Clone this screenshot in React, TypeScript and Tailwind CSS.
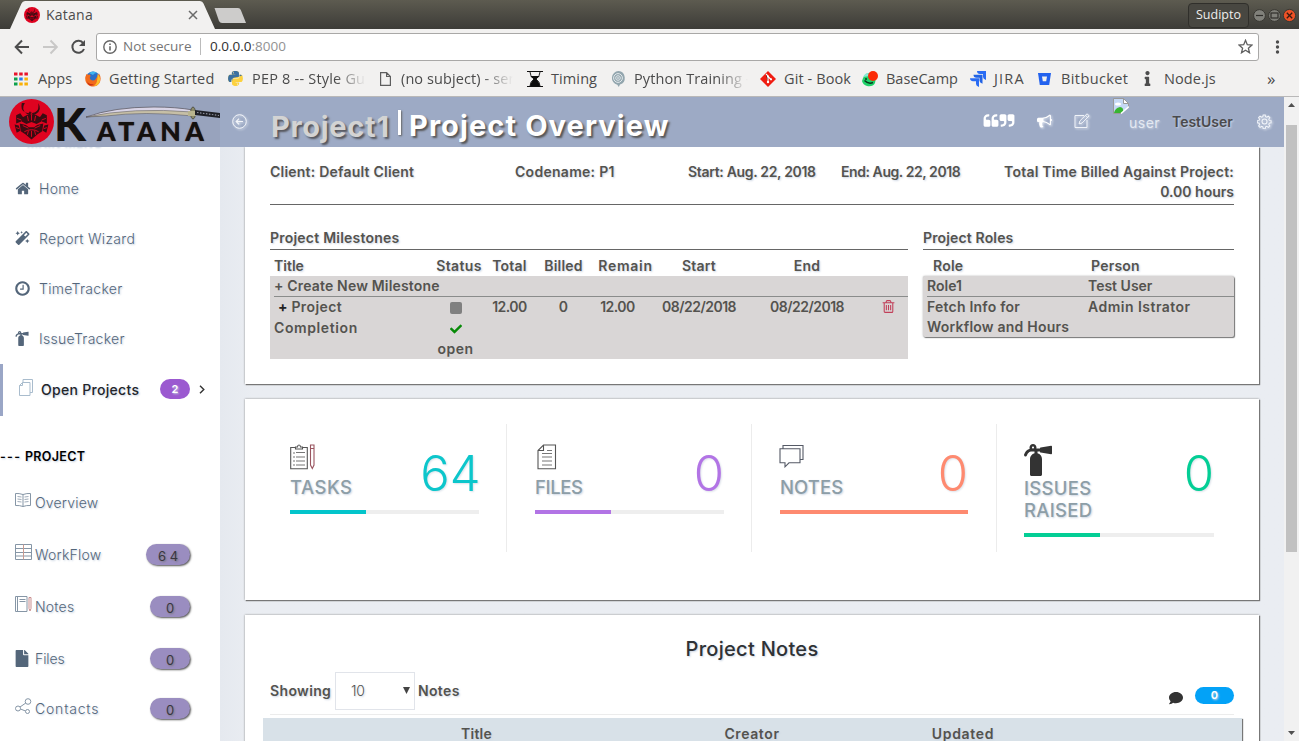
import React from "react";
import { FaMagic, FaFireExtinguisher, FaFile, FaCheck, FaComment, FaPython, FaInfo } from "react-icons/fa";

const FA = {
  home: "M1472 992v480q0 26-19 45t-45 19h-384v-384h-256v384h-384q-26 0-45-19t-19-45v-480q0-1 .5-3t.5-3l575-474 575 474q1 2 1 6zm223-69l-62 74q-8 9-21 11h-3q-13 0-21-7l-692-577-692 577q-12 8-24 7-13-2-21-11l-62-74q-8-10-7-23.5t11-21.5l719-599q32-26 76-26t76 26l244 204v-195q0-14 9-23t23-9h192q14 0 23 9t9 23v408l219 182q10 8 11 21.5t-7 23.5z",
  clock:
    "M1024 544v448q0 14-9 23t-23 9h-320q-14 0-23-9t-9-23v-64q0-14 9-23t23-9h224v-352q0-14 9-23t23-9h64q14 0 23 9t9 23zm416 352q0-148-73-273t-198-198-273-73-273 73-198 198-73 273 73 273 198 198 273 73 273-73 198-198 73-273zm224 0q0 209-103 385.5t-279.5 279.5-385.5 103-385.5-103-279.5-279.5-103-385.5 103-385.5 279.5-279.5 385.5-103 385.5 103 279.5 279.5 103 385.5z",
  trash:
    "M704 736v576q0 14-9 23t-23 9h-64q-14 0-23-9t-9-23v-576q0-14 9-23t23-9h64q14 0 23 9t9 23zm256 0v576q0 14-9 23t-23 9h-64q-14 0-23-9t-9-23v-576q0-14 9-23t23-9h64q14 0 23 9t9 23zm256 0v576q0 14-9 23t-23 9h-64q-14 0-23-9t-9-23v-576q0-14 9-23t23-9h64q14 0 23 9t9 23zm128 724v-948h-896v948q0 22 7 40.5t14.5 27 10.5 8.5h832q3 0 10.5-8.5t14.5-27 7-40.5zm-672-1076h448l-48-117q-7-9-17-11h-317q-10 2-17 11zm928 32v64q0 14-9 23t-23 9h-96v948q0 83-47 143.5t-113 60.5h-832q-66 0-113-58.5t-47-141.5v-952h-96q-14 0-23-9t-9-23v-64q0-14 9-23t23-9h309l70-167q15-37 54-63t79-26h320q40 0 79 26t54 63l70 167h309q14 0 23 9t9 23z",
  bullhorn:
    "M1664 640q53 0 90.5 37.5t37.5 90.5-37.5 90.5-90.5 37.5v384q0 52-38 90t-90 38q-417-347-812-380-58 19-91 66t-31 100.5 40 92.5q-20 33-23 65.5t6 58 33.5 55 48 50 61.5 50.5q-29 58-111.5 83t-168.5 11.5-132-55.5q-7-23-29.5-87.5t-32-94.5-23-89-15-101 3.5-98.5 22-110.5h-122q-66 0-113-47t-47-113v-192q0-66 47-113t113-47h480q435 0 896-384 52 0 90 38t38 90v384zm-128 604v-954q-394 302-768 343v270q377 42 768 341z",
  quoteLeft:
    "M832 960v384q0 80-56 136t-136 56h-384q-80 0-136-56t-56-136v-704q0-104 40.5-198.5t109.5-163.5 163.5-109.5 198.5-40.5h64q26 0 45 19t19 45v128q0 26-19 45t-45 19h-64q-106 0-181 75t-75 181v32q0 40 28 68t68 28h224q80 0 136 56t56 136zm896 0v384q0 80-56 136t-136 56h-384q-80 0-136-56t-56-136v-704q0-104 40.5-198.5t109.5-163.5 163.5-109.5 198.5-40.5h64q26 0 45 19t19 45v128q0 26-19 45t-45 19h-64q-106 0-181 75t-75 181v32q0 40 28 68t68 28h224q80 0 136 56t56 136z",
  quoteRight:
    "M832 320v704q0 104-40.5 198.5t-109.5 163.5-163.5 109.5-198.5 40.5h-64q-26 0-45-19t-19-45v-128q0-26 19-45t45-19h64q106 0 181-75t75-181v-32q0-40-28-68t-68-28h-224q-80 0-136-56t-56-136v-384q0-80 56-136t136-56h384q80 0 136 56t56 136zm896 0v704q0 104-40.5 198.5t-109.5 163.5-163.5 109.5-198.5 40.5h-64q-26 0-45-19t-19-45v-128q0-26 19-45t45-19h64q106 0 181-75t75-181v-32q0-40-28-68t-68-28h-224q-80 0-136-56t-56-136v-384q0-80 56-136t136-56h384q80 0 136 56t56 136z",
};

function Fa({ d, className }: { d: string; className?: string }) {
  return (
    <svg viewBox="0 0 1792 1792" fill="currentColor" className={className}>
      <path d={d} />
    </svg>
  );
}

/* ---------- browser window ---------- */

function TitleBar() {
  return (
    <div className="relative flex h-[29px] items-start bg-linear-to-b from-[#5d5b50] to-[#3d3c38]">
      <svg className="absolute left-0 top-0" width="260" height="29" viewBox="0 0 260 29">
        <path d="M10 29 L21.5 3.5 Q22.5 1 25 1 H200 Q202.500 1 203.500 3.500 L215 29 Z" fill="#f2f1f0" />
        <path d="M214.500 8 H238 Q240 8 240.800 10 L246 23 H222 Q220 23 219 21 Z" fill="#cdcccb" />
      </svg>
      <div className="relative flex h-[29px] w-[203px] items-center pl-[24px]">
        <Mask className="h-4 w-4" />
        <span className="ml-1.5 text-[14px] tracking-[0.24px] text-[#4c4c4c]">Katana</span>
        <svg className="ml-auto mr-[5px]" width="10" height="10" viewBox="0 0 10 10" stroke="#6a6a6a" strokeWidth="1.5">
          <path d="M1 1l8 8M9 1l-8 8" />
        </svg>
      </div>
      <div className="ml-auto flex h-[29px] items-center">
        <div className="mr-[4px] mt-px flex h-[25px] w-[61px] items-center justify-center rounded-[4px] border border-[#302f2b] bg-[#484741] text-[12.500px] text-[#eeeeec]">
          Sudipto
        </div>
        <svg width="46" height="14" viewBox="0 0 46 14">
          <g stroke="#383732" strokeWidth="1">
            <circle cx="6.500" cy="7.500" r="5.900" fill="#80807a" />
            <path d="M3 7.500h7" stroke="#2f2e2a" strokeWidth="1.200" />
            <circle cx="21.500" cy="7.500" r="5.900" fill="#80807a" />
            <rect x="18" y="5" width="7" height="5" fill="none" stroke="#2f2e2a" strokeWidth="1.200" />
            <circle cx="36.500" cy="7.500" r="6.100" fill="#ee5126" />
            <path d="M33.800 4.800l5.400 5.400M39.200 4.800l-5.400 5.400" stroke="#3a1a10" strokeWidth="1.300" />
          </g>
        </svg>
      </div>
    </div>
  );
}

function Toolbar() {
  return (
    <div className="flex h-[35px] items-center bg-[#f2f1f0]">
      <svg className="ml-[13px]" width="76" height="20" viewBox="0 0 76 20" fill="none" strokeWidth="2">
        <path d="M16 10H3M9 3.500L2.700 10L9 16.500" stroke="#4d4d4d" />
        <path d="M30 10h13M37.500 3.500L43.800 10L37.500 16.500" stroke="#c9c8c7" />
        <path d="M70.300 6.300A6 6 0 1 0 71 12" stroke="#4d4d4d" />
        <path d="M72 3v6h-6z" fill="#4d4d4d" />
      </svg>
      <div className="ml-[7px] flex h-[28px] w-[1163px] items-center rounded-[3px] border border-[#a9a8a7] bg-white pl-1.5 text-[13.500px]">
        <svg width="14" height="14" viewBox="0 0 14 14" fill="none" stroke="#666" strokeWidth="1.400">
          <circle cx="7" cy="7" r="6.200" />
          <path d="M7 6.200v4.300M7 3.400v1.500" strokeWidth="1.600" />
        </svg>
        <span className="ml-[6px] w-[69px] whitespace-nowrap text-[#757575]">Not secure</span>
        <span className="ml-2 mr-[9px] h-[17px] w-px bg-[#bbb]" />
        <span className="text-[#303030]">
          0.0.0.0<span className="text-[#929292]">:8000</span>
        </span>
        <svg className="ml-auto mr-[5px]" width="15" height="15" viewBox="0 0 15 15" fill="none" stroke="#5f5f5f" strokeWidth="1.300">
          <path d="M7.500 1.300l1.800 4.400 4.700.4-3.600 3.100 1.100 4.600-4-2.500-4 2.500 1.100-4.600L1 6.100l4.700-.4z" />
        </svg>
      </div>
      <svg className="ml-[16px]" width="5" height="16" viewBox="0 0 5 16" fill="#4c4c4c">
        <circle cx="2.500" cy="3" r="1.700" />
        <circle cx="2.500" cy="8" r="1.700" />
        <circle cx="2.500" cy="13" r="1.700" />
      </svg>
    </div>
  );
}

function Bookmark({
  icon,
  width,
  gap = "pl-2",
  fade,
  children,
}: {
  icon: React.ReactNode;
  width: string;
  gap?: string;
  fade?: boolean;
  children: string;
}) {
  return (
    <div className={`flex shrink-0 items-center ${width}`}>
      <span className="flex shrink-0 items-center">{icon}</span>
      <span className={`overflow-hidden whitespace-nowrap ${gap} ${fade ? "w-[122px] mask-r-from-75% mask-r-to-100%" : ""}`}>
        {children}
      </span>
    </div>
  );
}

function Bookmarks() {
  return (
    <div className="flex h-[33px] items-center border-b border-[#b9b8b8] bg-[#f2f1f0] pb-[3px] pl-[14px] text-[14.500px] tracking-[0.100px] text-[#4b4b4b]">
      <Bookmark
        width="w-[71px]"
        gap="pl-[10px]"
        icon={
          <svg width="14" height="14" viewBox="0 0 14 14">
            <path d="M0 .5h3.500v3H0zM5.200.5h3.500v3H5.200zM10.400.5h3.500v3h-3.500z" fill="#e8152c" />
            <path d="M0 5.500h3.500v3H0z" fill="#0da04b" />
            <path d="M5.200 5.500h3.500v3H5.200z" fill="#2a7bf0" />
            <path d="M10.400 5.500h3.500v3h-3.500zM5.200 10.500h3.500v3H5.200zM10.400 10.500h3.500v3h-3.500z" fill="#f9b108" />
            <path d="M0 10.500h3.500v3H0z" fill="#0da04b" />
          </svg>
        }
      >
        Apps
      </Bookmark>
      <Bookmark
        width="w-[142px] tracking-[0.200px]"
        icon={
          <svg width="16" height="16" viewBox="0 0 16 16">
            <circle cx="8" cy="7.500" r="7" fill="#2c6fc9" />
            <path d="M4 2q4-3 8 0-3 0-4 2z" fill="#3fb6ef" />
            <path d="M1.500 3Q3 4 4.500 3.600 6 4 5.200 6q-1 .5.300 2.500 2 1.500 4.500.5l3-4.500 1-2Q17 7 14.500 12 11 17 5 15-.500 12.500.300 6z" fill="#f26b1c" />
            <path d="M12.500 3Q16 6 14.800 10.500 13 15 9 15q4-3 3.500-12z" fill="#fcc02c" />
            <path d="M2 10q2 4 7 3-3 3-6 0z" fill="#c92f17" />
          </svg>
        }
      >
        Getting Started
      </Bookmark>
      <Bookmark
        width="w-[153px] tracking-[0.200px]"
        fade
        icon={
          <svg width="17" height="17" viewBox="0 0 512 512">
            <defs>
              <clipPath id="py-top">
                <path d="M0 0h512v130L360 200 200 235 130 370H0z" />
              </clipPath>
            </defs>
            <FaPython size={512} color="#fcd13e" />
            <g clipPath="url(#py-top)">
              <FaPython size={512} color="#3a70a2" />
            </g>
          </svg>
        }
      >
        PEP 8 -- Style Guide
      </Bookmark>
      <Bookmark
        width="w-[147px]"
        gap="pl-[10px]"
        fade
        icon={
          <svg width="11" height="14" viewBox="0 0 11 14" fill="none" stroke="#5e5e5e" strokeWidth="1.200">
            <path d="M.6.600h6l3.800 3.900v8.900H.6zM6.600.600v3.900h3.800" />
          </svg>
        }
      >
        (no subject) - sender
      </Bookmark>
      <Bookmark
        width="w-[84px]"
        icon={
          <svg width="16" height="16" viewBox="0 0 16 16">
            <path d="M0 .5h16M0 15.500h16" stroke="#111" strokeWidth="1.200" />
            <path d="M3 1q0 4 4 7-4 3-4 7M13 1q0 4-4 7 4 3 4 7" fill="none" stroke="#222" />
            <path d="M3.300 5h9.400Q11 7 9 8q3.500 3 4 7H3q.500-4 4-7-2.500-1-3.700-3z" fill="#0d0d0d" />
          </svg>
        }
      >
        Timing
      </Bookmark>
      <Bookmark
        width="w-[149px]"
        fade
        icon={
          <svg width="15" height="16" viewBox="0 0 15 16">
            <path d="M7.500 0A7 7 0 0 1 9 13.600L7.800 16 6.300 13.800A7 7 0 0 1 7.500 0z" fill="#93a6ae" />
            <g fill="none" stroke="#e3e9ec" strokeWidth="1">
              <circle cx="7" cy="7" r="4.400" />
              <circle cx="7" cy="7" r="2.300" />
              <circle cx="7" cy="7" r=".5" />
            </g>
          </svg>
        }
      >
        Python Training -
      </Bookmark>
      <Bookmark
        width="w-[102px]"
        icon={
          <svg width="16" height="16" viewBox="0 0 16 16">
            <path d="M8 0l8 8-8 8-8-8z" fill="#f01d12" />
            <path d="M6 3l2 2v6.500M8 5.500l3 3" stroke="#fff" strokeWidth="1.100" />
            <circle cx="8" cy="5.500" r="1.100" fill="#fff" />
            <circle cx="8" cy="11" r="1.200" fill="#fff" />
            <circle cx="11" cy="8.300" r="1.100" fill="#fff" />
          </svg>
        }
      >
        Git - Book
      </Bookmark>
      <Bookmark
        width="w-[108px] tracking-[0px]"
        icon={
          <svg width="16" height="16" viewBox="0 0 16 16">
            <path d="M0 10Q2 3 6 2l8 5-1 5q-2 4-8 3-4-1-5-5z" fill="#1fd269" />
            <path d="M1 6q2-4 5-4l2 3z" fill="#8ae9d7" />
            <path d="M2.500 9.500q4 4 8.500 2" stroke="#063b1c" strokeWidth="1.500" fill="none" />
            <circle cx="4" cy="8" r="1" fill="#063b1c" />
            <circle cx="11" cy="5" r="5" fill="#fb2a07" />
          </svg>
        }
      >
        BaseCamp
      </Bookmark>
      <Bookmark
        width="w-[68px] tracking-[1.200px]"
        icon={
          <svg width="16" height="16" viewBox="0 0 16 16" fill="#2a6cf4">
            <path d="M7 0h9v9q-3-1-3-3V3h-3Q7 3 7 0z" />
            <path d="M3.500 3.700h9v9q-3-1-3-3v-3h-3q-3 0-3-3z" fill="#2263e4" />
            <path d="M0 7.300h9V16q-3-1-3-3v-2.700H3Q0 10 0 7.300z" />
          </svg>
        }
      >
        JIRA
      </Bookmark>
      <Bookmark
        width="w-[106px] tracking-[0.400px]"
        gap="pl-[10px]"
        icon={
          <svg width="13" height="12" viewBox="0 0 13 12">
            <path d="M0 0h13l-1.800 12H1.800z" fill="#2362ee" />
            <path d="M4 3.600h5l-.8 4.600H4.800z" fill="#f2f1f0" />
          </svg>
        }
      >
        Bitbucket
      </Bookmark>
      <Bookmark width="w-[103px]" gap="pl-[13px]" icon={<FaInfo className="h-[15px] w-[7px] text-[#4d4d4d]" />}>
        Node.js
      </Bookmark>
      <span className="ml-[20px] text-[17px] leading-none">»</span>
    </div>
  );
}

function Mask({ className }: { className?: string }) {
  return (
    <svg viewBox="0 0 44 44" className={className}>
      <circle cx="22" cy="22" r="22" fill="#df0320" />
      <g fill="#3a0c12">
        <path d="M15.500 4Q11 11 18 15l2.500 1 1.500-3 1.500 3 2.500-1q7-4 2.500-11 1.500 7-3 9l-3.500 1-1.500-2-1.500 2-3.500-1q-4.500-2-3-9z" />
        <path d="M7 16l4-2 3 4-2 4-5 2zM37 16l-4-2-3 4 2 4 5 2z" />
        <path d="M13 18q9-6 18 0l.500 4-4.500 2.500-5-2-5 2L12.500 22z" />
        <path d="M10.500 24l6 1.500 3 2h5l3-2 6-1.500-1 7.500-4.500 3-6 5-6-5-4.500-3z" />
        <path d="M5.500 25l4 1 1.500 5-3.500 2zM38.500 25l-4 1-1.500 5 3.500 2z" />
      </g>
      <g stroke="#df0320" strokeWidth=".9" fill="none">
        <path d="M22 15v6M18 16.500l1 5M26 16.500l-1 5M13.500 26l5.500 2.500M30.500 26L25 28.500M15 32q7-4 14 0M18 35l1-4M22 37v-6M26 35l-1-4M8 19l4 1.500M36 19l-4 1.500M7 28l3 1M37 28l-3 1" />
      </g>
    </svg>
  );
}

/* ---------- application header ---------- */

function Logo() {
  return (
    <div className="relative h-[50px] w-[220px] shrink-0 self-start overflow-hidden bg-[#98a3bd]">
      <Mask className="absolute left-[9px] top-[2px] h-[45px] w-[45px]" />
      <div className="absolute left-[54px] top-[5px] flex items-baseline whitespace-nowrap font-['Lato'] font-black leading-[44px] text-[#14110f]">
        <span className="w-[43px] origin-left text-[46px]">K</span>
        <span className="text-[26.500px] tracking-[4.600px] [text-shadow:0_0_1px_#5a3038]">ATANA</span>
      </div>
      <svg className="absolute left-[84px] top-[8px]" width="136" height="18" viewBox="0 0 136 18">
        <path d="M2 12Q30 2 70 2 92 2 109 5v3Q60 4 24 10L2 12z" fill="#d9d4e6" stroke="#54525a" strokeWidth=".7" />
        <path d="M2 12q46-10 107-5v4Q60 6 22 11z" fill="#c6bfa6" stroke="#54525a" strokeWidth=".5" />
        <ellipse cx="109" cy="8" rx="2.500" ry="6" fill="#8b8a68" stroke="#3c3c34" strokeWidth=".7" />
        <path d="M104 6h8v5h-8z" fill="#b8b48e" />
        <path d="M111 5l25 3v5l-25-3z" fill="#1f2026" />
        <path d="M113 7.500l22 3" stroke="#8c8f9b" strokeWidth="1.200" strokeDasharray="1.500 1.500" />
      </svg>
    </div>
  );
}

const iconGlow = "drop-shadow-[1px_1px_1px_#dfe5f0]";

function Header() {
  return (
    <header className="flex h-[50px] w-[1284px] items-center overflow-hidden bg-[#9daac5] pb-[2px]">
      <Logo />
      <svg className={`ml-3 ${iconGlow}`} width="15" height="15" viewBox="0 0 15 15" fill="none" stroke="#f4f6fa" strokeWidth="1">
        <circle cx="7.500" cy="7.500" r="6.800" />
        <path d="M11 7.500H4.300M7 4.700L4.200 7.500 7 10.300" strokeWidth="1.200" />
      </svg>
      <h1 className="ml-6 flex items-center whitespace-nowrap text-[29px] font-bold leading-none text-white">
        <span className="w-[127px] pt-[10px] tracking-[0.700px] text-[#d3d3d3] [text-shadow:2px_2px_2px_#55565c]">Project1</span>
        <span className="mt-[3px] h-[25px] w-[3px] shrink-0 bg-white shadow-[1px_1px_2px_#666]" />
        <span className="ml-[8px] w-[574px] pt-[8px] tracking-[1.100px] [text-shadow:2px_2px_2px_#555]">Project Overview</span>
      </h1>
      <div className="flex items-center text-white">
        <Fa d={FA.quoteLeft} className="h-4 w-4" />
        <Fa d={FA.quoteRight} className="h-4 w-4" />
      </div>
      <Fa d={FA.bullhorn} className={`ml-[22px] h-[16px] w-[15px] text-white ${iconGlow}`} />
      <svg className={`ml-[22px] ${iconGlow}`} width="16" height="16" viewBox="0 0 16 16" fill="none" stroke="#f0f3f8" strokeWidth="1">
        <path d="M10 2.500H1v12h12V7M5 10.800l.9-2.900L13 .8l2.200 2-7.200 7.300zM11.500 2.300l2 2" />
      </svg>
      <div className="ml-[23px] flex h-[48px] w-[47px] items-start pt-px">
        <svg width="16" height="16" viewBox="0 0 16 16" className="shrink-0">
          <path d="M.5.500h10l5 5v10H.5z" fill="#c5d8f5" stroke="#999" />
          <path d="M10.500.500v5h5z" fill="#fff" stroke="#999" />
          <ellipse cx="5" cy="6" rx="3" ry="1.600" fill="#fff" />
          <path d="M1 15q1-5 6-6 4 0 3 6z" fill="#38b432" />
          <path d="M8 16l8-7v7z" fill="#9daac5" />
          <path d="M8 15.500L16 8.500" stroke="#fff" strokeWidth="1.500" />
        </svg>
        <span className="mt-[15px] text-[14px] leading-5 tracking-[0.500px] text-[#e4e9f2] [text-shadow:1px_1px_2px_#c5cfe0]">user</span>
      </div>
      <span className="ml-[12px] w-[85px] text-[14px] font-semibold text-[#4a4a4c] [text-shadow:1px_1px_2px_#d0d8e8]">TestUser</span>
      <svg className={iconGlow} width="15" height="15" viewBox="0 0 24 24" fill="none" stroke="#f2f5fa" strokeWidth="1.700">
        <circle cx="12" cy="12" r="4" />
        <path d="M10.300 1.500h3.400l.6 3 2 .9 2.600-1.700 2.400 2.400-1.700 2.600.9 2 3 .6v3.400l-3 .6-.9 2 1.700 2.600-2.400 2.400-2.600-1.700-2 .9-.6 3h-3.400l-.6-3-2-.9-2.600 1.700-2.400-2.400 1.700-2.600-.9-2-3-.6V11.300l3-.6.9-2L2.700 6.100l2.400-2.400 2.600 1.700 2-.9z" transform="scale(.96)" />
      </svg>
    </header>
  );
}

/* ---------- sidebar ---------- */

function NavItem({ icon, label }: { icon: React.ReactNode; label: string }) {
  return (
    <li className="flex h-[50px] items-center pb-[2px] pl-[15px]">
      <span className="flex w-[24px] items-center">{icon}</span>
      <span className="tracking-[0.300px]">{label}</span>
    </li>
  );
}

function SubItem({
  icon,
  label,
  count,
  wide,
  height = "h-[52px]",
  tracking = "tracking-[0.200px]",
}: {
  icon: React.ReactNode;
  label: string;
  count?: string;
  wide?: boolean;
  height?: string;
  tracking?: string;
}) {
  return (
    <li className={`flex items-center pl-[15px] pr-[30px] ${height}`}>
      <span className="flex w-[20px] items-center pb-1">{icon}</span>
      <span className={tracking}>{label}</span>
      {count && (
        <span
          className={`ml-auto flex h-[21px] items-center justify-center rounded-full bg-[#9a8dc0] pt-[5px] text-[13px] font-normal text-[#39363f] shadow-[1px_1px_2px_#555] [text-shadow:1px_1px_2px_#777] ${
            wide ? "w-[44px]" : "w-[40px]"
          }`}
        >
          {count}
        </span>
      )}
    </li>
  );
}

function Sidebar() {
  return (
    <nav className="h-[594px] w-[220px] shrink-0 overflow-hidden bg-white text-[14px] font-light text-[#54667a] [text-shadow:1px_1px_2px_#c3cfdd]">
      <div className="-mt-[13px] h-[30px] pl-[26px] text-[12px] font-semibold leading-[17px] tracking-[0.500px] text-[#dfe2e8]">
        MAIN MENU
      </div>
      <ul>
        <NavItem label="Home" icon={<Fa d={FA.home} className="h-[17px] w-[16px]" />} />
        <NavItem label="Report Wizard" icon={<FaMagic className="h-[14px] w-[15px]" />} />
        <NavItem label="TimeTracker" icon={<Fa d={FA.clock} className="-ml-px h-[17px] w-[17px]" />} />
        <NavItem label="IssueTracker" icon={<FaFireExtinguisher className="h-[15px] w-[14px]" />} />
      </ul>
      <div className="flex h-[52px] items-center border-l-[3px] border-[#9aa6c6] pb-[2px] pl-[16px] font-medium text-[#23262b]">
        <svg width="14" height="17" viewBox="0 0 14 17" fill="none" stroke="#a9bccd" strokeWidth="1" className="mb-1">
          <path d="M4 3.500V.5h9.500v13H11M.5 6.500l3-3H11v13H.5zM.5 6.500h3v-3" />
        </svg>
        <span className="ml-[8px] w-[119px] whitespace-nowrap tracking-[0.300px]">Open Projects</span>
        <span className="flex h-5 w-[30px] items-center justify-center rounded-full bg-[#9b59d0] text-[11px] font-semibold text-white">2</span>
        <svg className="ml-[9px]" width="6" height="9" viewBox="0 0 6 9" fill="none" stroke="#333" strokeWidth="1.400">
          <path d="M1 .8l3.800 3.700L1 8.200" />
        </svg>
      </div>
      <div className="mt-[31px] h-[20px] whitespace-nowrap text-[12.500px] font-semibold leading-[20px] text-black">
        <span className="inline-block w-[25px] tracking-[1.300px]">---</span>
        <span className="tracking-[0.300px]">PROJECT</span>
      </div>
      <ul className="mt-[9px]">
        <SubItem
          label="Overview"
          icon={
            <svg width="16" height="14" viewBox="0 0 16 14" fill="none" stroke="#8696a6" strokeWidth="1">
              <path d="M8 1.500Q4 .200.500.500v12q4-.300 7.500 1 3.500-1.300 7.500-1v-12Q12 .200 8 1.500zM8 1.500v12" />
              <path d="M2.500 3.500l4 .5M2.500 6l4 .5M2.500 8.500l4 .5M9.500 4l4-.5M9.500 6.500l4-.5M9.500 9l4-.5" strokeWidth=".8" />
            </svg>
          }
        />
        <SubItem
          label="WorkFlow"
          count="6 4"
          wide
          icon={
            <svg width="17" height="16" viewBox="0 0 17 16" fill="none" stroke="#8696a6" strokeWidth="1">
              <path d="M.5.500h16v15H.5zM.5 4.500h16M.5 8.500h16M.5 12h16" />
              <path d="M8.500.500v15" stroke="#c99a90" />
            </svg>
          }
        />
        <SubItem
          label="Notes"
          count="0"
          icon={
            <svg width="17" height="16" viewBox="0 0 17 16" fill="none" stroke="#8696a6" strokeWidth="1">
              <path d="M.5.500h11.500v15H.5zM2.500.500v15M4.500 3.500h6M4.500 5.500h6" />
              <path d="M14 1.500h2v11l-1 2.500-1-2.500z" stroke="#c98f8f" />
            </svg>
          }
        />
        <SubItem label="Files" count="0" tracking="tracking-[-0.100px]" icon={<FaFile className="mt-1 h-[17px] w-[14px]" />} />
        <SubItem
          label="Contacts"
          count="0"
          height="h-[48px]"
          tracking="tracking-[0.800px]"
          icon={
            <svg width="17" height="17" viewBox="0 0 17 17" fill="none" stroke="#8696a6" strokeWidth="1">
              <circle cx="13" cy="3.500" r="2.800" />
              <circle cx="3" cy="10.500" r="2.500" />
              <circle cx="12.500" cy="13.500" r="2" />
              <path d="M5 9l5.800-4M5.500 11l5 2" />
            </svg>
          }
        />
      </ul>
    </nav>
  );
}

/* ---------- content ---------- */

const cardShadow = "shadow-[1px_1px_1px_#777,0_0_2px_#888]";
const milestoneColumns = "grid grid-cols-[158px_55px_53px_55px_69px_78px_138px_1fr]";

function Overview() {
  return (
    <section className={`h-[237px] bg-white px-[25px] pt-[15px] font-semibold ${cardShadow}`}>
      <div className="flex h-[43px] border-b border-[#666] leading-5">
        <span className="w-[245px]">Client: Default Client</span>
        <span className="w-[173px] tracking-[0.280px]">Codename: P1</span>
        <span className="w-[153px] whitespace-nowrap tracking-[-0.320px]">Start: Aug. 22, 2018</span>
        <span className="w-[125px] whitespace-nowrap tracking-[-0.430px]">End: Aug. 22, 2018</span>
        <span className="ml-auto whitespace-nowrap text-right">
          Total Time Billed Against Project:
          <br />
          <span className="tracking-[0px]">0.00 hours</span>
        </span>
      </div>
      <div className="mt-[23px] flex justify-between leading-5">
        <div className="w-[638px]">
          <div className="h-[22px] border-b border-[#666]">Project Milestones</div>
          <div className={`mt-[6px] h-[20px] text-center ${milestoneColumns}`}>
            <span className="pl-1 text-left tracking-[0px]">Title</span>
            <span className="whitespace-nowrap pl-[7px] tracking-[0.350px]">Status</span>
            <span>Total</span>
            <span>Billed</span>
            <span className="tracking-[0.700px]">Remain</span>
            <span>Start</span>
            <span>End</span>
          </div>
          <div className="h-[83px] bg-[#d9d6d6] [text-shadow:none]">
            <div className="ml-1 h-[21px] border-b border-[#8a8c8b] tracking-[0.170px]">+ Create New Milestone</div>
            <div className={`-mt-px text-center leading-[21px] ${milestoneColumns}`}>
              <span className="pl-1 text-left tracking-[0.600px]">
                <span className="pl-1 font-bold tracking-[0px] text-[#222]">+</span>
                <span className="tracking-[0.400px]"> Project</span>
                <br />
                Completion
              </span>
              <span className="flex flex-col items-center">
                <span className="mt-[6px] h-3 w-3 rounded-[2px] bg-[#808080]" />
                <FaCheck className="mt-[9px] h-3 w-3 text-[#078a07]" />
                <span className="mt-[3px] tracking-[0.500px]">open</span>
              </span>
              <span className="tracking-[-0.500px]">12.00</span>
              <span>0</span>
              <span className="pr-4 tracking-[-0.500px]">12.00</span>
              <span className="tracking-[-0.500px]">08/22/2018</span>
              <span className="tracking-[-0.500px]">08/22/2018</span>
              <Fa d={FA.trash} className="ml-[5px] mt-[3px] h-[15px] w-[15px] text-[#c1405a]" />
            </div>
          </div>
        </div>
        <div className="w-[311px]">
          <div className="h-[22px] border-b border-[#666] tracking-[0.150px]">Project Roles</div>
          <div className="mt-[6px] flex h-[20px]">
            <span className="w-[158px] pl-[10px]">Role</span>
            <span className="pl-[10px]">Person</span>
          </div>
          <div className="h-[61px] rounded-[2px] bg-[#d9d6d6] pl-1 shadow-[1px_1px_1px_#777,0_0_2px_#aaa] [text-shadow:none]">
            <div className="flex h-[21px] border-b border-[#8a8c8b] tracking-[0px]">
              <span className="w-[161px]">Role1</span>
              <span>Test User</span>
            </div>
            <div className="flex">
              <span className="w-[161px] whitespace-nowrap">
                Fetch Info for
                <br />
                Workflow and Hours
              </span>
              <span className="tracking-[0.480px]">Admin Istrator</span>
            </div>
          </div>
        </div>
      </div>
    </section>
  );
}

function Stat({
  icon,
  label,
  value,
  color,
  bar,
  fill,
  labelClass = "tracking-[0px]",
  className = "",
}: {
  icon: React.ReactNode;
  label: React.ReactNode;
  value: string;
  color: string;
  bar: string;
  fill: string;
  labelClass?: string;
  className?: string;
}) {
  return (
    <div className={`h-[128px] w-[245px] pt-5 ${className}`}>
      <div className="flex justify-between">
        <div>
          <div className="min-h-[32px] text-[#333]">{icon}</div>
          <div className={`text-[18.500px] font-medium leading-[22px] text-[#8d9ea7] ${labelClass}`}>{label}</div>
        </div>
        <div className={`h-[50px] pt-[4px] text-[49px] font-light leading-[52px] tracking-[0px] [text-shadow:1px_1px_2px_#dde2ea] ${color}`}>
          {value}
        </div>
      </div>
      <div className="mt-[12px] h-1 bg-[#eeeeee]">
        <div className={`h-1 ${bar} ${fill}`} />
      </div>
    </div>
  );
}

function Stats() {
  return (
    <section className={`mt-[15px] flex h-[201px] bg-white pl-[17px] pt-[25px] ${cardShadow}`}>
      <Stat
        label="TASKS"
        labelClass="tracking-[0.500px]"
        value="64"
        color="text-[#0cc6cb] -mr-[1.500px]"
        bar="bg-[#03c5cb]"
        fill="w-[40%]"
        className="border-r border-[#ececec] pl-7 pr-[27px]"
        icon={
          <svg width="25" height="26" viewBox="0 0 25 26" fill="none" stroke="#555" strokeWidth="1.100">
            <path d="M5 3.500H.7v21.300h16.600V3.500H13M5.500 5V3h2Q7.500 1 9 1t1.500 2h2v2z" />
            <path d="M3 9h2M6 8.500h9M3 13h2M6 13h9M3 17h2M6 17h9M3 21h2M6 21h9" stroke="#777" />
            <path d="M20.500 1h3.500v20l-1.700 3.500-1.800-3.500zM20.500 4.500H24" stroke="#9a5560" />
          </svg>
        }
      />
      <Stat
        label="FILES"
        labelClass="tracking-[-0.400px]"
        value="0"
        color="text-[#b274e5]"
        bar="bg-[#b274e5]"
        fill="w-[40%]"
        className="border-r border-[#ececec] pl-7 pr-[27px]"
        icon={
          <svg width="22" height="26" viewBox="0 0 22 26" fill="none" stroke="#555" strokeWidth="1.100">
            <path d="M8.500 1H20.500v23.800H3V6.500zM8.500 1v5.500H3" />
            <path d="M12 6.500h5M7 9.500h10M7 13h10M7 17h10M7 21h10" stroke="#777" />
          </svg>
        }
      />
      <Stat
        label="NOTES"
        labelClass="tracking-[0.100px]"
        value="0"
        color="text-[#fe8a70]"
        bar="bg-[#fe8a70]"
        fill="w-full"
        className="border-r border-[#ececec] pl-7 pr-[28px]"
        icon={
          <svg width="25" height="24" viewBox="0 0 25 24" fill="none" stroke="#555a66" strokeWidth="1.100" className="-ml-px">
            <path d="M1 4.800h20v14H10l-4 4v-4H1zM4 4.500V1.500h20v14h-3" />
          </svg>
        }
      />
      <Stat
        label={
          <>
            ISSUES
            <br />
            RAISED
          </>
        }
        labelClass="tracking-[0.300px]"
        value="0"
        color="text-[#03ce95]"
        bar="bg-[#03ce95]"
        fill="w-[40%]"
        className="pl-[27px] pr-[28px]"
        icon={<FaFireExtinguisher className="-mt-px h-[34px] w-[28px]" />}
      />
    </section>
  );
}

function Notes() {
  return (
    <section className={`mt-[15px] h-[140px] overflow-hidden bg-white px-[18px] pt-[20px] ${cardShadow}`}>
      <h2 className="text-center text-[20px] font-medium leading-7 tracking-[0.300px] text-[#2f3236]">Project Notes</h2>
      <div className="ml-[7px] mr-[7px] mt-[9px] flex h-[43px] border-b border-[#ececec] font-semibold">
        <div className="flex h-[38px] items-center">
          <span className="w-[65px] pb-[2px] tracking-[0.350px]">Showing</span>
          <span className="flex h-[38px] w-[80px] items-center justify-between border border-[#e1e4ea] pb-px pl-[15px] pr-1 font-light tracking-[-0.300px]">
            10
            <svg width="7" height="7" viewBox="0 0 7 7" fill="#444">
              <path d="M0 0h7L3.500 7z" />
            </svg>
          </span>
          <span className="ml-[3px] pb-[2px] tracking-[0.350px]">Notes</span>
        </div>
        <div className="ml-auto flex h-[46px] items-center">
          <FaComment className="mt-[5px] h-[14px] w-[14px] text-[#333]" />
          <span className="ml-[12px] flex h-[17px] w-[39px] items-center justify-center rounded-full bg-[#03a2f7] text-[11px] font-semibold text-white">
            0
          </span>
        </div>
      </div>
      <div className="mt-[3px] grid h-[40px] w-[979px] grid-cols-[427px_124px_298px_1fr] bg-[#d8e1e8] pt-[6px] text-center font-semibold leading-5 shadow-[1px_1px_1px_#777]">
        <span>Title</span>
        <span className="tracking-[0.600px]">Creator</span>
        <span className="tracking-[0.700px]">Updated</span>
      </div>
    </section>
  );
}

function Scrollbar() {
  return (
    <div className="flex h-[644px] w-[15px] flex-col items-center bg-[#f1f1f1]">
      <svg className="mt-[6px]" width="7" height="4" viewBox="0 0 7 4" fill="#505050">
        <path d="M3.500 0L7 4H0z" />
      </svg>
      <div className="mt-[18px] h-[427px] w-[11px] bg-[#c1c1c1]" />
      <svg className="mb-[6px] mt-auto" width="7" height="4" viewBox="0 0 7 4" fill="#505050">
        <path d="M3.500 4L7 0H0z" />
      </svg>
    </div>
  );
}

export default function App() {
  return (
    <div className="h-[741px] w-[1299px] overflow-hidden bg-[#eaedf2]">
      <div className="font-['Open_Sans','Noto_Sans',sans-serif]">
        <TitleBar />
        <Toolbar />
        <Bookmarks />
      </div>
      <div className="flex font-['Inter','Liberation_Sans',sans-serif]">
        <div className="w-[1284px]">
          <Header />
          <div className="flex h-[594px] overflow-hidden">
            <Sidebar />
            <main className="h-[594px] w-[1064px] bg-linear-to-r from-[#e5e9ef] via-[#eaedf2] via-3% to-[#eaedf2] pl-[25px] pr-[25px] text-[14px] tracking-[0.220px] text-[#54534f] [text-shadow:1px_1px_2px_#ccd5e2]">
              <Overview />
              <Stats />
              <Notes />
            </main>
          </div>
        </div>
        <Scrollbar />
      </div>
    </div>
  );
}
